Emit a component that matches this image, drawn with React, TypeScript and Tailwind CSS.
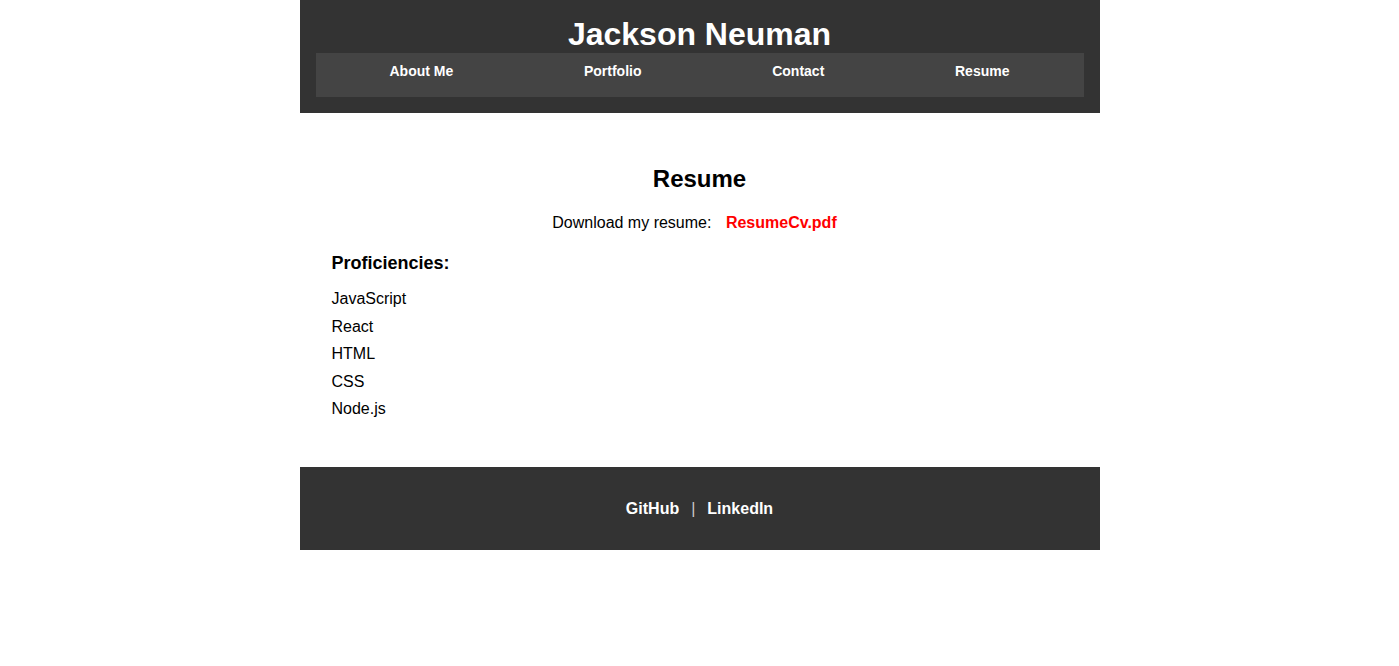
const navLinks = ['About Me', 'Portfolio', 'Contact', 'Resume'];
const skills = ['JavaScript', 'React', 'HTML', 'CSS', 'Node.js'];

export default function App() {
  return (
    <div className="min-h-screen bg-white font-['Liberation_Sans',Arial,sans-serif] text-black">
      <div className="mx-auto w-[800px]">
        {/* Header */}
        <header className="bg-[#333333] px-4 pb-4 pt-[16px] text-white">
          <h1 className="text-center text-[32px] font-bold leading-[37px]">Jackson Neuman</h1>
          <nav className="h-[44px] bg-[#444444] px-[74px] pt-[10px]">
            <ul className="flex justify-between">
              {navLinks.map((link) => (
                <li key={link} className="text-[14px] font-bold leading-[16px]">
                  {link}
                </li>
              ))}
            </ul>
          </nav>
        </header>

        {/* Resume section */}
        <main className="px-8 pb-[44px] pt-[52px]">
          <h2 className="text-center text-[24px] font-bold leading-[28px]">Resume</h2>
          <p className="mt-[21px] text-center text-[16px] leading-[18px]">
            Download my resume:
            <a className="mx-[10px] font-bold text-[#ff0000]"> ResumeCv.pdf</a>
          </p>
          <h3 className="mt-[21px] text-[18px] font-bold leading-[21px]">Proficiencies:</h3>
          <ul className="mt-[11px]">
            {skills.map((skill) => (
              <li key={skill} className="text-[16px] leading-[27.5px]">
                {skill}
              </li>
            ))}
          </ul>
        </main>

        {/* Footer */}
        <footer className="flex h-[83px] items-center justify-center bg-[#333333] pt-[2px] text-[16px] font-bold text-white">
          <span>GitHub</span>
          <span className="mx-[12px] font-normal text-[#cccccc]">|</span>
          <span>LinkedIn</span>
        </footer>
      </div>
    </div>
  );
}
